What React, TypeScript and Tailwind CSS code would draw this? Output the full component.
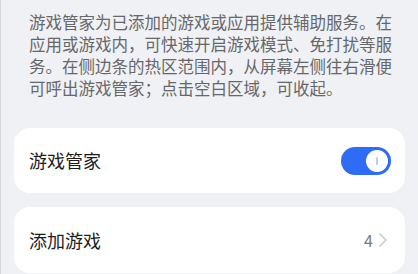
export default function App() {
  return (
    <div
      className="w-[418px] h-[274px] overflow-hidden bg-[#f0f1f5] border-l-[1.5px] border-[#d6d7db]"
      style={{ fontFamily: '"Noto Sans CJK SC", "Noto Sans", sans-serif' }}
    >
      <p className="pl-[28px] pr-[20px] pt-[11px] text-[16.5px] leading-[22px] text-[#666769]">
        游戏管家为已添加的游戏或应用提供辅助服务。在应用或游戏内，可快速开启游戏模式、免打扰等服务。在侧边条的热区范围内，从屏幕左侧往右滑便可呼出游戏管家；点击空白区域，可收起。
      </p>

      <div className="mt-[29px] mx-[13px] flex flex-col gap-[14px]">
        <div className="h-[65px] rounded-[16px] bg-white flex items-center justify-between pl-[15px] pr-[14px]">
          <span className="text-[18px] text-[#1c1c1e]">游戏管家</span>
          <div className="w-[50px] h-[28px] rounded-full bg-[#2e6cf6] flex items-center justify-end pr-[3px]">
            <div className="w-[22px] h-[22px] rounded-full bg-white flex items-center justify-center">
              <div className="w-[2px] h-[8px] rounded-full bg-[#b9cdf6]" />
            </div>
          </div>
        </div>

        <div className="h-[66px] rounded-[16px] bg-white flex items-center justify-between pl-[15px] pr-[18px]">
          <span className="text-[18px] text-[#1c1c1e]">添加游戏</span>
          <div className="flex items-center gap-[6px]">
            <span className="text-[16px] text-[#7a7a7c]">4</span>
            <svg width="8" height="14" viewBox="0 0 8 14" fill="none">
              <path d="M1 1l6 6-6 6" stroke="#c4c4c6" strokeWidth="1.4" strokeLinecap="round" strokeLinejoin="round" />
            </svg>
          </div>
        </div>
      </div>
    </div>
  );
}
